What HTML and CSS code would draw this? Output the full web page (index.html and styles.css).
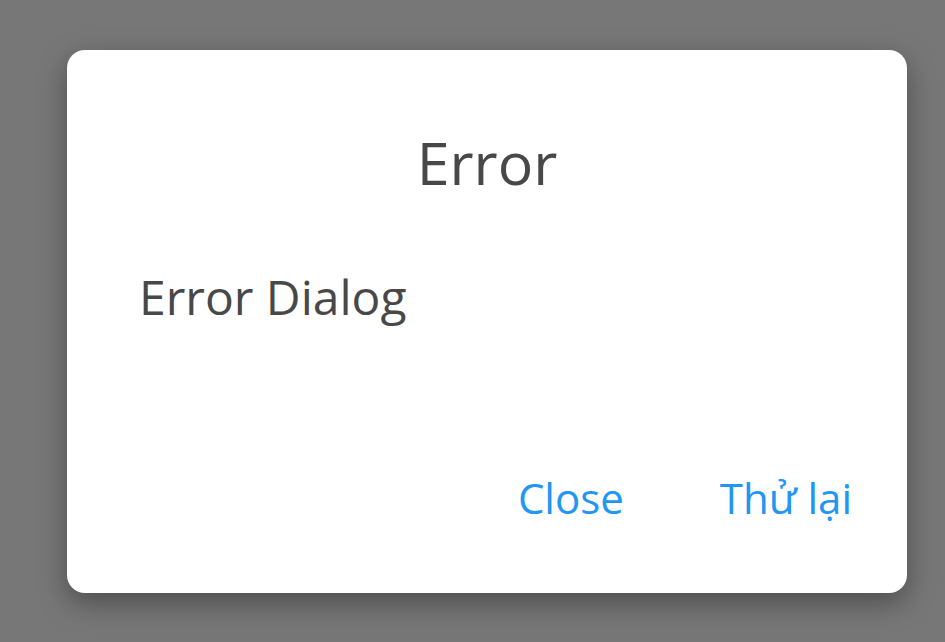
FILE: index.html
```html
<!DOCTYPE html>
<html lang="vi">
<head>
<meta charset="utf-8">
<title>Error</title>
<link rel="stylesheet" href="styles.css">
</head>
<body>
<div class="scrim">
  <div class="dialog">
    <h1 class="title">Error</h1>
    <p class="content">Error Dialog</p>
    <div class="actions">
      <button class="btn">Close</button>
      <button class="btn">Thử lại</button>
    </div>
  </div>
</div>
</body>
</html>
```
FILE: styles.css
```css
html, body {
  margin: 0;
  padding: 0;
  height: 100%;
}
body {
  background: #777777;
  font-family: "Open Sans", "Noto Sans", sans-serif;
  overflow: hidden;
}
.scrim {
  padding: 50px 38px 0 67px;
}
.dialog {
  box-sizing: border-box;
  width: 840px;
  height: 543px;
  background: #ffffff;
  border-radius: 18px;
  box-shadow: 0 10px 28px rgba(0, 0, 0, 0.35);
  display: flex;
  flex-direction: column;
  padding: 71px 55px 0 72px;
}
.title {
  margin: 0 17px 0 0;
  font-weight: 400;
  font-size: 59px;
  line-height: 82px;
  color: #484848;
  text-align: center;
}
.content {
  margin: 61px 0 0 0;
  font-size: 48px;
  line-height: 65px;
  color: #484848;
}
.actions {
  margin-top: auto;
  margin-bottom: 65px;
  display: flex;
  justify-content: flex-end;
  gap: 96px;
}
.btn {
  border: none;
  background: none;
  padding: 0;
  font-family: inherit;
  font-size: 42px;
  line-height: 60px;
  color: #2196f3;
}
```
